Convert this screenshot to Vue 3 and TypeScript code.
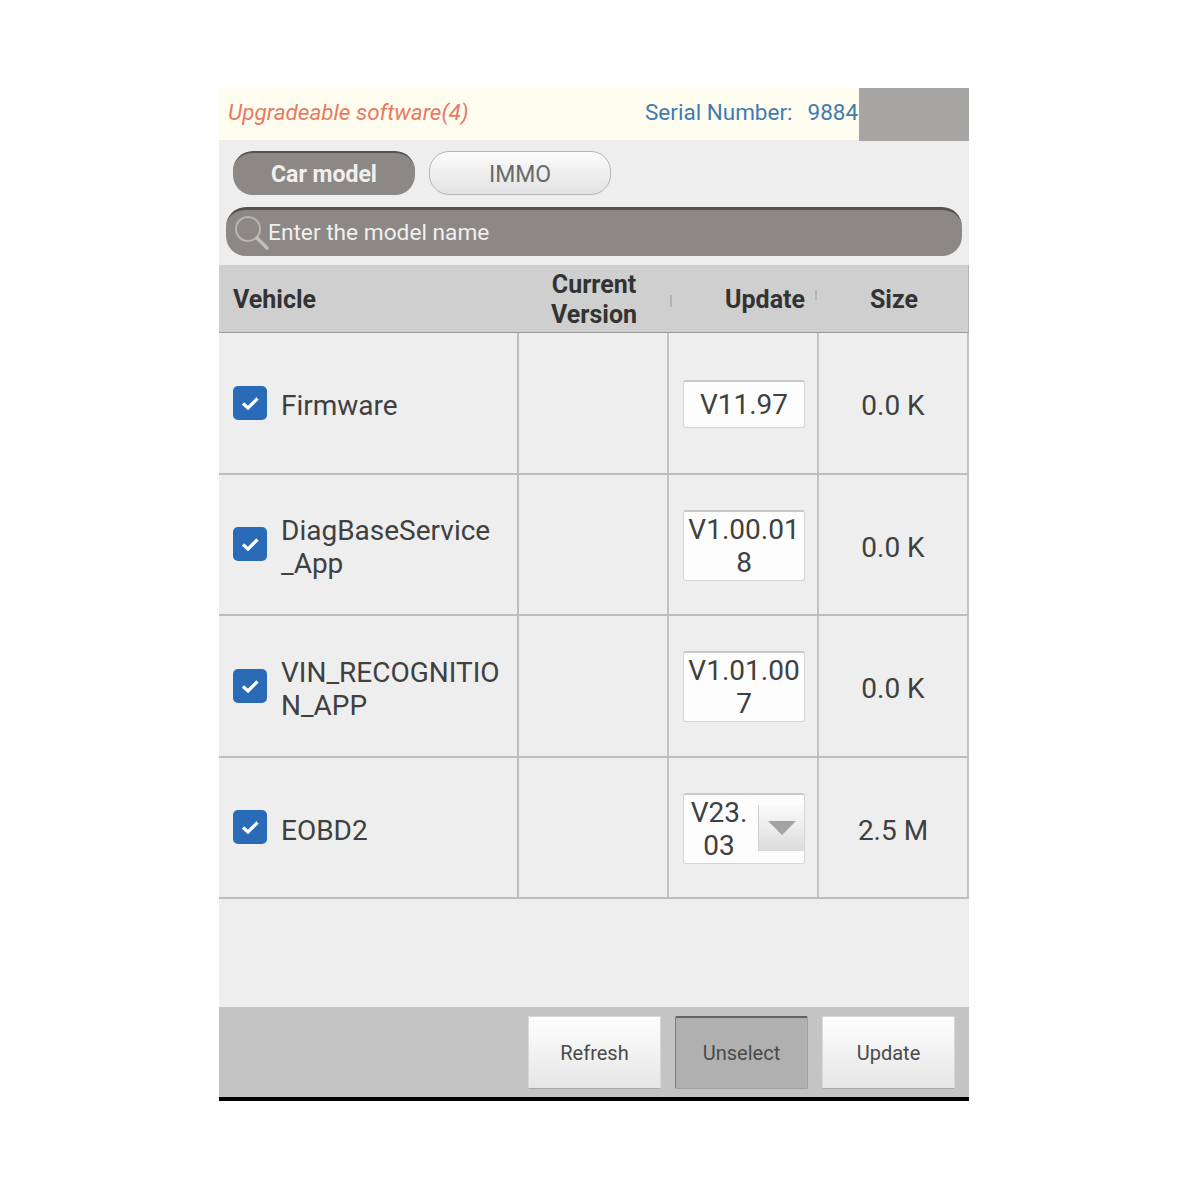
<script setup lang="ts">
interface Row { name: string; version: string[]; size: string; select?: boolean }
const rows: Row[] = [
  { name: 'Firmware', version: ['V11.97'], size: '0.0 K' },
  { name: 'DiagBaseService\n_App', version: ['V1.00.01', '8'], size: '0.0 K' },
  { name: 'VIN_RECOGNITIO\nN_APP', version: ['V1.01.00', '7'], size: '0.0 K' },
  { name: 'EOBD2', version: ['V23.', '03'], size: '2.5 M', select: true },
]
</script>

<template>
  <div class="page">
    <div class="frame">
      <div class="top">
        <span class="title">Upgradeable software(4)</span>
        <span class="serial">Serial Number:<span class="num">9884</span></span>
        <div class="mask"></div>
      </div>
      <div class="tabs">
        <div class="tab active">Car model</div>
        <div class="tab">IMMO</div>
      </div>
      <div class="search">
        <svg class="lens" width="36" height="36" viewBox="0 0 36 36" fill="none">
          <circle cx="15" cy="14" r="12" stroke="#b9b7b3" stroke-width="2" />
          <path d="M24 23 L34 33" stroke="#c2c0bc" stroke-width="3.4" stroke-linecap="round" />
        </svg>
        <span>Enter the model name</span>
      </div>
      <div class="table">
        <div class="head">
          <div class="hc vehicle">Vehicle</div>
          <div class="hc center">Current<br />Version<i class="tick t1"></i></div>
          <div class="hc center upd">Update<i class="tick t2"></i></div>
          <div class="hc center">Size</div>
        </div>
        <div v-for="r in rows" :key="r.name" class="row">
          <div class="cell name">
            <svg class="check" width="34" height="34" viewBox="0 0 34 34">
              <rect x="0" y="0" width="34" height="34" rx="5" fill="#2a6bb8" />
              <path d="M10 17.5 L15 22 L24.5 12.5" fill="none" stroke="#fff" stroke-width="3.2" />
            </svg>
            <span class="label">{{ r.name }}</span>
          </div>
          <div class="cell"></div>
          <div class="cell ver">
            <div class="box" :class="{ tall: r.version.length > 1, sel: r.select }">
              <div class="vtext"><div v-for="l in r.version" :key="l">{{ l }}</div></div>
              <div v-if="r.select" class="drop"><i class="tri"></i></div>
            </div>
          </div>
          <div class="cell size">{{ r.size }}</div>
        </div>
      </div>
      <div class="spacer"></div>
      <div class="foot">
        <div class="btn">Refresh</div>
        <div class="btn pressed">Unselect</div>
        <div class="btn">Update</div>
      </div>
    </div>
  </div>
</template>

<style>
html, body { background: #fff; margin: 0; }
</style>

<style scoped>
.page {
  width: 1188px;
  height: 1188px;
  padding: 88px 0 0 219px;
  box-sizing: border-box;
  font-family: Roboto, "Liberation Sans", sans-serif;
}
.frame {
  width: 750px;
  height: 1013px;
  background: #eeeeee;
  display: flex;
  flex-direction: column;
  border-bottom: 4px solid #000;
  box-sizing: border-box;
}
.top {
  height: 52px;
  flex: none;
  background: #fffdf0;
  position: relative;
  display: flex;
  align-items: center;
  padding: 0 0 5px 9px;
  box-sizing: border-box;
  font-size: 22.5px;
}
.title { color: #e87a62; font-style: italic; }
.serial { color: #3f7cb0; position: absolute; left: 426px; white-space: nowrap; }
.num { margin-left: 15px; }
.mask {
  position: absolute;
  left: 640px;
  top: 0;
  width: 110px;
  height: 53px;
  background: #a6a5a3;
}
.tabs {
  display: flex;
  gap: 14px;
  padding: 11px 0 0 14px;
  flex: none;
}
.tab {
  width: 182px;
  height: 44px;
  box-sizing: border-box;
  border-radius: 20px;
  border: 1px solid #b5b5b5;
  padding-top: 2px;
  background: linear-gradient(#fbfbfb, #e3e3e3);
  color: #6a6a6a;
  font-size: 23px;
  display: flex;
  align-items: center;
  justify-content: center;
}
.tab.active {
  background: #8b8885;
  border: 0;
  padding-top: 0;
  border-top: 2px solid #55524f;
  color: #f1f0ee;
  font-weight: 700;
}
.search {
  margin: 12px 7px 0;
  height: 49px;
  flex: none;
  box-sizing: border-box;
  border-radius: 20px;
  background: #8b8885;
  border-top: 3px solid #55524f;
  color: #f1f0ee;
  font-size: 22.7px;
  display: flex;
  align-items: center;
  padding: 0 0 2px 42px;
  position: relative;
}
.lens { position: absolute; left: 7px; top: 5px; }
.table { margin-top: 9px; flex: none; }
.head, .row {
  display: grid;
  grid-template-columns: 300px 150px 150px 150px;
}
.head {
  height: 68px;
  background: #cfcfcf;
  border-bottom: 1px solid #9b9b9b;
  border-right: 1px solid #b5b5b5;
  box-sizing: border-box;
  color: #333;
  font-size: 25px;
  font-weight: 700;
  line-height: 30px;
}
.hc { display: flex; align-items: center; position: relative; padding-top: 3px; box-sizing: border-box; }
.hc.vehicle { padding-left: 14px; }
.hc.center { justify-content: center; text-align: center; }
.hc.upd { padding-left: 42px; }
.tick { position: absolute; width: 2px; background: #b5b5b5; }
.t1 { right: -3px; top: 30px; height: 12px; }
.t2 { right: 2px; top: 25px; height: 10px; }
.row {
  height: 141.5px;
  box-sizing: border-box;
  border-bottom: 2px solid #bdbdbd;
}
.cell {
  border-right: 2px solid #c2c2c2;
  box-sizing: border-box;
  display: flex;
  align-items: center;
  color: #404040;
  font-size: 28px;
}
.cell.name { padding-left: 14px; gap: 14px; border-right-color: #bdbdbd; }
.check { flex: none; }
.label { white-space: pre; line-height: 33px; padding-top: 6px; }
.ver { justify-content: center; padding: 2px 0 0 2px; }
.box {
  width: 122px;
  height: 48px;
  box-sizing: border-box;
  background: #fdfdfd;
  border: 1px solid #d5d5d5;
  border-top: 2px solid #c9c9c9;
  border-radius: 3px;
  display: flex;
  align-items: center;
  justify-content: center;
  text-align: center;
  line-height: 33px;
}
.box.tall { height: 71px; }
.box.sel { justify-content: flex-start; position: relative; }
.vtext { white-space: nowrap; }
.box.sel .vtext { width: 68px; margin-left: 1px; }
.drop {
  position: absolute;
  right: 0;
  top: 10px;
  width: 46px;
  height: 46px;
  box-sizing: border-box;
  border-left: 1px solid #d0d0d0;
  background: linear-gradient(#fbfbfb, #dcdcdc);
  display: flex;
  align-items: center;
  justify-content: center;
}
.tri {
  width: 0;
  height: 0;
  border-left: 14px solid transparent;
  border-right: 14px solid transparent;
  border-top: 14px solid #a3a3a3;
}
.size { justify-content: center; padding-top: 6px; }
.spacer { flex: 1; }
.foot {
  height: 90px;
  flex: none;
  background: #c4c4c4;
  display: flex;
  justify-content: flex-end;
  align-items: flex-start;
  gap: 14px;
  padding: 9px 14px 0 0;
  box-sizing: border-box;
}
.btn {
  width: 133px;
  height: 73px;
  box-sizing: border-box;
  background: linear-gradient(#fefefe, #e6e6e6);
  border: 1px solid #d8d8d8;
  border-bottom-color: #a9a9a9;
  color: #4a4a4a;
  font-size: 20px;
  display: flex;
  align-items: center;
  justify-content: center;
}
.btn.pressed {
  background: #b0b0b0;
  border: 1px solid #a0a0a0;
  border-top: 2px solid #616161;
  border-left-color: #7c7c7c;
  border-radius: 2px;
}
</style>
